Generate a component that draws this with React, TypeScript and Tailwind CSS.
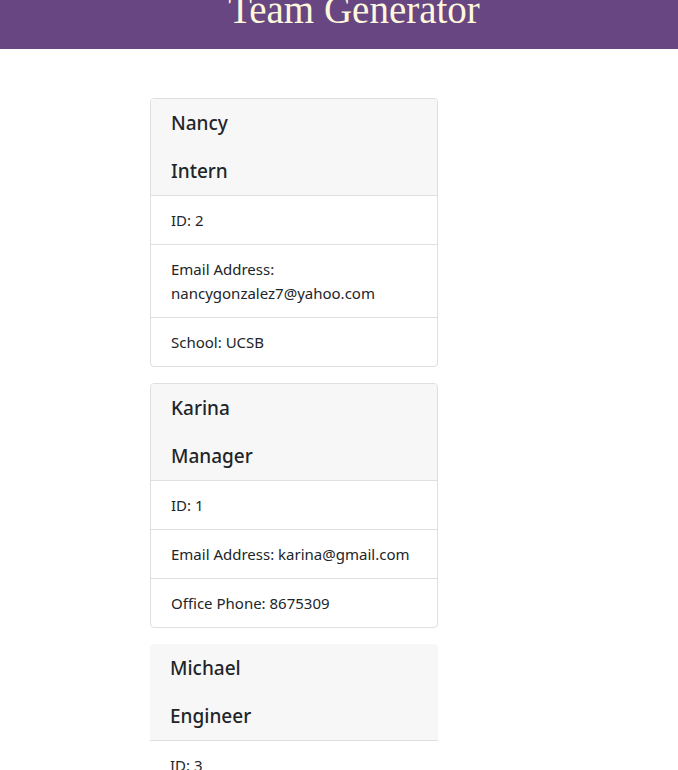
const team = [
  {
    name: 'Nancy',
    role: 'Intern',
    items: ['ID: 2', 'Email Address: nancygonzalez7@yahoo.com', 'School: UCSB'],
    bordered: true,
  },
  {
    name: 'Karina',
    role: 'Manager',
    items: ['ID: 1', 'Email Address: karina@gmail.com', 'Office Phone: 8675309'],
    bordered: true,
  },
  {
    name: 'Michael',
    role: 'Engineer',
    items: ['ID: 3', 'Email Address: michael@gmail.com', 'GitHub: michael'],
    bordered: false,
  },
];

function MemberCard({ name, role, items, bordered }: (typeof team)[number]) {
  return (
    <div
      className={
        bordered
          ? 'w-[288px] rounded border border-[#dfdfdf] bg-white overflow-hidden'
          : 'w-[288px] rounded-t bg-white overflow-hidden'
      }
    >
      <div
        className={
          bordered
            ? 'bg-[#f7f7f7] border-b border-[#dfdfdf] px-5 py-3'
            : 'bg-[#f7f7f7] border-b border-[#dfdfdf] pl-5 pr-5 py-3'
        }
      >
        <h5 className="text-[19px] leading-6 font-medium">{name}</h5>
        <h5 className="text-[19px] leading-6 font-medium mt-6">{role}</h5>
      </div>
      <ul>
        {items.map((item, i) => (
          <li
            key={item}
            className={
              i < items.length - 1
                ? 'px-5 py-3 border-b border-[#dfdfdf] leading-6'
                : 'px-5 py-3 leading-6'
            }
          >
            {item}
          </li>
        ))}
      </ul>
    </div>
  );
}

export default function App() {
  return (
    <div
      className="h-[770px] overflow-hidden bg-white text-[#212529] text-[15px]"
      style={{ fontFamily: '"Noto Sans", "Open Sans", sans-serif' }}
    >
      <header className="h-[49px] bg-[#674682] overflow-hidden flex justify-center pl-[30px]">
        <h1
          className="text-[39px] leading-none text-[#fdf8dc] -mt-[10px] whitespace-nowrap"
          style={{ fontFamily: '"Liberation Serif", serif' }}
        >
          Team Generator
        </h1>
      </header>
      <main className="pt-[49px] pl-[150px] flex flex-col gap-4">
        {team.map((m) => (
          <MemberCard key={m.name} {...m} />
        ))}
      </main>
    </div>
  );
}
